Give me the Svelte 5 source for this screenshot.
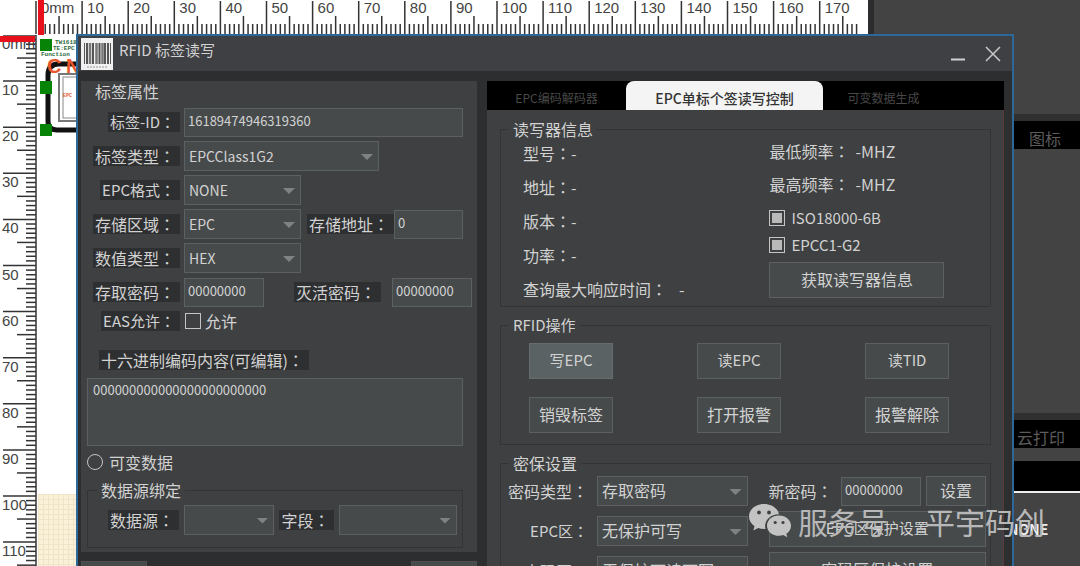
<script lang="ts">
  const STEP = 4.61;
  const ticks = (count: number) =>
    Array.from({ length: count }, (_, i) => ({
      at: i * STEP,
      kind: i % 10 === 0 ? "major" : i % 5 === 0 ? "mid" : "minor",
      label: i === 0 ? "0mm" : String(i),
    }));
  const across = ticks(179);
  const down = ticks(116);

  let tagId = $state("16189474946319360");
  let address = $state("0");
  let accessPwd = $state("00000000");
  let killPwd = $state("00000000");
  let easAllowed = $state(false);
  let hexContent = $state("000000000000000000000000");
  let newPwd = $state("00000000");
  let isoPartial = $state(true);
  let epcPartial = $state(true);

  let tab = $state(1);
  const tabs = ["EPC编码解码器", "EPC单标个签读写控制", "可变数据生成"];
  const readerInfo = ["型号", "地址", "版本", "功率"];
  const actions = ["写EPC", "读EPC", "读TID", "销毁标签", "打开报警", "报警解除"];
</script>

<!-- the TC face centres the full-width colon -->
{#snippet colon()}<i class="colon">：</i>{/snippet}

{#snippet combo(id: string, value: string)}
  <span class="combo" class:latin={/^\w+$/.test(value)}>
    <select {id}><option>{value}</option></select>
  </span>
{/snippet}

<div class="desktop">
  <main class="editor">
    <svg class="ruler-x" aria-hidden="true">
      {#each across as t}
        <line class="tick" x1={36 + t.at} x2={36 + t.at} y1={t.kind === "major" ? 1 : t.kind === "mid" ? 16 : 24} y2="34" />
        {#if t.kind === "major"}<text x={41 + t.at} y="13">{t.label}</text>{/if}
      {/each}
      <rect x="38" y="0" width="6" height="35" fill="#e8101a" />
    </svg>
    <div class="work">
      <svg class="ruler-y" aria-hidden="true">
        <line class="tick" x1="36" x2="36" y1="0" y2="1200" />
        {#each down as t}
          <line class="tick" y1={t.at} y2={t.at} x1={t.kind === "major" ? 3 : t.kind === "mid" ? 17 : 26} x2="36" />
          {#if t.kind === "major"}<text x="2" y={14 + t.at}>{t.label}</text>{/if}
        {/each}
        <rect x="0" y="1" width="35" height="6" fill="#e8101a" />
      </svg>
      <div class="paper">
        <div class="sheet">
          <svg width="60" height="110" viewBox="0 0 60 110" aria-hidden="true">
            <text class="tiny" x="17" y="9">TW16189</text>
            <text class="tiny" x="15" y="15">TE:EPC</text>
            <text class="tiny" x="3" y="21">Function</text>
            <path d="M60 29H21Q10 29 10 40V86Q10 95 19 95H60" fill="none" stroke="#111" stroke-width="5" />
            <text class="brand" x="9" y="38">C</text>
            <text class="brand" x="28" y="38">N</text>
            <rect x="21" y="39" width="50" height="47" fill="#fff" stroke="#777" stroke-width="2" />
            <rect x="25" y="42" width="46" height="41" fill="#fff" stroke="#888" />
            <text class="epc" x="25" y="62">EPC</text>
            <rect class="grip" x="2" y="4" width="12" height="12" />
            <rect class="grip" x="2" y="46" width="12" height="13" />
            <rect class="grip" x="2" y="89" width="12" height="12" />
          </svg>
        </div>
        <div class="grid-area"></div>
      </div>
    </div>
  </main>

  <aside class="side">
    <h2>图标</h2>
    <div class="fill"></div>
    <h2 class="print">云打印</h2>
    <div class="black"></div>
    <p>NONE</p>
  </aside>

  <div class="dialog" role="dialog" aria-labelledby="dlg-title">
    <header>
      <svg class="logo" width="32" height="32" viewBox="0 0 32 32" aria-hidden="true">
        <rect width="32" height="32" fill="#f0f0f0" />
        <path d="M3.500 5V26M29.500 5V26" stroke="#555" />
        <path d="M6 5V26M12 5V26M18.500 5V26M24 5V26M27 5V26" stroke="#555" stroke-width="2" />
        <path d="M9 5V26M15.500 5V26M21.500 5V26" stroke="#777" stroke-width="2.500" />
        <path d="M6 29H26" stroke="#999" stroke-dasharray="2 1" />
      </svg>
      <h1 id="dlg-title">RFID 标签读写</h1>
      <button class="win" aria-label="最小化">
        <svg width="16" height="16" viewBox="0 0 16 16"><path d="M1 13.500H15" stroke="#d0d0d0" stroke-width="2" /></svg>
      </button>
      <button class="win" aria-label="关闭">
        <svg width="16" height="16" viewBox="0 0 16 16"><path d="M1 1L15 15M15 1L1 15" stroke="#c8c8c8" stroke-width="1.500" /></svg>
      </button>
    </header>

    <div class="body">
      <div class="left">
        <section class="props">
          <h2>标签属性</h2>
          <div class="row">
            <label class="mixed" for="tag-id"><span>标签-ID{@render colon()}</span></label>
            <input id="tag-id" class="grow" bind:value={tagId} />
          </div>
          <div class="row wide">
            <label for="tag-type"><span>标签类型{@render colon()}</span></label>
            {@render combo("tag-type", "EPCClass1G2")}
          </div>
          <div class="row">
            <label class="mixed" for="epc-format"><span>EPC格式{@render colon()}</span></label>
            {@render combo("epc-format", "NONE")}
          </div>
          <div class="row">
            <label for="bank"><span>存储区域{@render colon()}</span></label>
            {@render combo("bank", "EPC")}
            <label class="second" for="address"><span>存储地址{@render colon()}</span></label>
            <input id="address" class="grow" bind:value={address} />
          </div>
          <div class="row">
            <label for="value-type"><span>数值类型{@render colon()}</span></label>
            {@render combo("value-type", "HEX")}
          </div>
          <div class="row pwd">
            <label for="access-pwd"><span>存取密码{@render colon()}</span></label>
            <input id="access-pwd" bind:value={accessPwd} />
            <label class="second" for="kill-pwd"><span>灭活密码{@render colon()}</span></label>
            <input id="kill-pwd" bind:value={killPwd} />
          </div>
          <div class="row eas">
            <label class="mixed" for="eas"><span>EAS允许{@render colon()}</span></label>
            <input id="eas" type="checkbox" bind:checked={easAllowed} />
            <label for="eas">允许</label>
          </div>
          <label class="hex-label" for="hex"><span>十六进制编码内容(可编辑){@render colon()}</span></label>
          <textarea id="hex" bind:value={hexContent}></textarea>
          <div class="variable">
            <input id="variable" type="radio" name="mode" value="variable" />
            <label for="variable">可变数据</label>
          </div>
          <fieldset class="bind">
            <legend>数据源绑定</legend>
            <label for="source"><span>数据源{@render colon()}</span></label>
            {@render combo("source", "")}
            <label for="field"><span>字段{@render colon()}</span></label>
            {@render combo("field", "")}
          </fieldset>
        </section>
        <footer>
          <button aria-label="保存"></button>
          <button aria-label="退出"></button>
        </footer>
      </div>

      <div class="right">
        <div class="tabs" role="tablist">
          {#each tabs as name, i}
            <button role="tab" aria-selected={tab === i} class:active={tab === i} onclick={() => (tab = i)}>{name}</button>
          {/each}
        </div>
        <div class="pane">
          <fieldset class="reader">
            <legend>读写器信息</legend>
            <div class="facts">
              {#each readerInfo as name}<p>{name}{@render colon()}-</p>{/each}
              <p>查询最大响应时间{@render colon()}<span class="gap">-</span></p>
            </div>
            <div class="caps">
              <p>最低频率{@render colon()}<span>-MHZ</span></p>
              <p>最高频率{@render colon()}<span>-MHZ</span></p>
              <label><input type="checkbox" bind:indeterminate={isoPartial} />ISO18000-6B</label>
              <label><input type="checkbox" bind:indeterminate={epcPartial} />EPCC1-G2</label>
              <button>获取读写器信息</button>
            </div>
          </fieldset>

          <fieldset class="ops">
            <legend class="mixed">RFID操作</legend>
            {#each actions as name, i}
              <button class:lit={i === 0} class:mixed={i < 3}>{name}</button>
            {/each}
          </fieldset>

          <fieldset class="secure">
            <legend>密保设置</legend>
            <div class="locks">
              <label for="pwd-type">密码类型{@render colon()}</label>
              {@render combo("pwd-type", "存取密码")}
              <label class="mixed" for="epc-lock">EPC区{@render colon()}</label>
              {@render combo("epc-lock", "无保护可写")}
              <label for="pwd-lock">密码区{@render colon()}</label>
              {@render combo("pwd-lock", "无保护可读可写")}
            </div>
            <div class="set">
              <div class="new-pwd">
                <label for="new-pwd">新密码{@render colon()}</label>
                <input id="new-pwd" bind:value={newPwd} />
                <button>设置</button>
              </div>
              <button class="mixed">EPC区保护设置</button>
              <button>密码区保护设置</button>
            </div>
          </fieldset>
        </div>
      </div>
    </div>
  </div>

  <div class="watermark">
    <svg width="42" height="34" viewBox="0 0 42 34" aria-hidden="true">
      <path
        d="M15 0C6.500 0 0 5.500 0 12.500C0 16.500 2.200 20 5.500 22.200L4.300 26.500L9.300 24C11 24.600 13 25 15 25L16.500 24.900C14.500 17 21 10 30 10.200C28.700 4.200 22.500 0 15 0Z"
        fill="#c3c3c3"
      />
      <path
        d="M30 11.500C23.200 11.500 18 16 18 21.700C18 27.400 23.200 31.800 30 31.800C31.500 31.800 33 31.500 34.300 31.100L38.300 33.300L37.300 29.700C40.200 27.900 42 25 42 21.700C42 16 36.800 11.500 30 11.500Z"
        fill="#c3c3c3"
      />
      <g fill="#3e4041">
        <circle cx="10" cy="8.500" r="1.900" /><circle cx="20" cy="8.500" r="1.900" />
        <circle cx="26.200" cy="18.500" r="1.600" /><circle cx="34" cy="18.500" r="1.600" />
      </g>
    </svg>
    <span>服务号</span>
    <span class="name">平宇码创</span>
  </div>
</div>

<style>
  :global(body) {
    background: #434343;
  }
  .desktop {
    position: relative;
    display: flex;
    height: 100vh;
    overflow: hidden;
    font: 16px/20px "Noto Sans CJK SC", sans-serif;
    color: #d2d2d2;
  }
  .desktop * {
    box-sizing: border-box;
  }
  h1,
  h2,
  p,
  fieldset,
  legend {
    margin: 0;
    padding: 0;
    font-size: 16px;
    font-weight: 400;
  }
  input,
  select,
  textarea,
  button {
    margin: 0;
    font: inherit;
    color: inherit;
    border-radius: 0;
  }
  .colon {
    font-family: "Noto Sans CJK TC", sans-serif;
    font-style: normal;
  }

  /* editor behind the dialog */
  .editor {
    flex: 1;
    display: flex;
    flex-direction: column;
    background: #fff;
    border-right: 6px solid #2c2c2e;
  }
  .ruler-x {
    width: 100%;
    height: 35px;
  }
  .work {
    flex: 1;
    display: flex;
    min-height: 0;
  }
  .ruler-y {
    width: 38px;
    height: 100%;
  }
  .ruler-x text,
  .ruler-y text {
    font: 15px "Liberation Sans", sans-serif;
    fill: #444;
  }
  .tick {
    stroke: #333;
    stroke-width: 1.5;
  }
  .paper {
    flex: 1;
    display: flex;
    flex-direction: column;
  }
  .sheet {
    height: 459px;
  }
  .grid-area {
    flex: 1;
    background:
      linear-gradient(#f0e4c8 1px, transparent 1px) 0 0 / 5px 5px,
      linear-gradient(90deg, #f0e4c8 1px, transparent 1px) 0 0 / 5px 5px,
      #fbf0d8;
  }
  .tiny {
    font: bold 6px "Liberation Mono", monospace;
    fill: #2c6b3c;
  }
  .brand {
    font: bold 20px "Liberation Sans", sans-serif;
    fill: #e8562a;
  }
  .epc {
    font: bold 5px "Liberation Mono", monospace;
    fill: #e0602f;
  }
  .grip {
    fill: #078407;
  }

  .side {
    width: 206px;
    padding-top: 114px;
    display: flex;
    flex-direction: column;
    background: #434343;
  }
  .side h2 {
    height: 35px;
    padding: 7px 0 0 155px;
    border-top: 7px solid #303030;
    background: #000;
    color: #5c5c5c;
    line-height: 20px;
  }
  .side h2.print {
    padding-left: 143px;
  }
  .side .fill {
    height: 264px;
  }
  .black {
    height: 32px;
    margin-top: 13px;
    background: #000;
    border-bottom: 2px solid #eee;
  }
  .side p {
    padding: 26px 0 0 134px;
    color: #eee;
    font-size: 14px;
    font-weight: 700;
  }

  /* dialog */
  .dialog {
    position: absolute;
    top: 34px;
    left: 76px;
    right: 66px;
    display: flex;
    flex-direction: column;
    background: #2d2e30;
    border: 2px solid #2d689b;
  }
  header {
    display: flex;
    align-items: flex-start;
    gap: 19px;
    height: 35px;
    padding: 2px 11px 0 3px;
    background: #3f4044;
  }
  .logo {
    margin-right: -13px;
  }
  h1 {
    flex: 1;
    font-size: 15px;
    padding-top: 2px;
  }
  .win {
    display: flex;
    padding: 8px 0 0;
    background: none;
    border: 0;
  }
  .body {
    display: grid;
    grid-template-columns: minmax(0, 396fr) minmax(0, 517fr);
    gap: 10px;
    padding: 10px 8px 0 3px;
  }

  input:not([type]),
  textarea,
  select,
  fieldset button,
  footer button {
    background: #464a4b;
    border: 1px solid #5b6061;
  }
  input:not([type]) {
    width: 80px;
    height: 29px;
    padding: 0 3px 4px;
    font-size: 13px;
  }
  .combo {
    position: relative;
    width: 117px;
    height: 30px;
  }
  .combo::after {
    content: "";
    position: absolute;
    top: 13px;
    right: 6px;
    width: 12px;
    height: 6px;
    background: #7e8283;
    clip-path: polygon(0 0, 100% 0, 50% 100%);
    pointer-events: none;
  }
  select {
    appearance: none;
    width: 100%;
    height: 100%;
    padding: 0 4px 2px;
  }
  .latin select {
    padding-bottom: 0;
    font-size: 14px;
  }
  fieldset {
    border: 1px solid #323435;
    min-width: 0;
  }
  legend {
    padding: 0 4px;
  }
  .mixed {
    font-size: 15px;
  }
  input[type="checkbox"],
  input[type="radio"] {
    appearance: none;
    width: 16px;
    height: 16px;
    padding: 2px;
    border: 1px solid #c4c4c4;
    background-clip: content-box;
  }
  input[type="checkbox"]:indeterminate,
  input:checked {
    background-color: #b9b9b9;
  }
  input[type="radio"] {
    border-radius: 50%;
  }

  .props {
    padding: 0 14px 4px 0;
    background: #3e4041;
  }
  .props h2 {
    padding-left: 14px;
    margin-bottom: 6px;
  }
  .row {
    display: flex;
    align-items: center;
    gap: 4px;
    height: 30px;
    margin-bottom: 4px;
  }
  .row > label:first-child {
    width: 99px;
    text-align: right;
  }
  label > span {
    display: inline-block;
    height: 20px;
    padding: 0 5px 0 2px;
    background: #2e2f31;
    white-space: nowrap;
    vertical-align: top;
  }
  .row .grow {
    flex: 1;
    width: 0;
  }
  .wide .combo {
    width: 195px;
  }
  .second {
    margin: 0 -4px 0 2px;
  }
  .pwd {
    margin-right: -9px;
  }
  .pwd .second {
    margin: 0 7px 0 auto;
  }
  .row.eas {
    height: 20px;
  }
  .eas input {
    margin-left: 1px;
  }
  .hex-label {
    display: block;
    margin: 19px 0 8px 18px;
  }
  textarea {
    display: block;
    width: calc(100% - 6px);
    height: 68px;
    margin-left: 6px;
    padding: 1px 5px;
    resize: none;
    overflow: hidden;
    font-size: 13px;
  }
  .variable {
    display: flex;
    align-items: center;
    gap: 6px;
    margin: 6px 0 8px 6px;
  }
  .bind {
    display: flex;
    align-items: center;
    gap: 5px;
    height: 68px;
    margin-left: 6px;
    padding: 0 5px 8px 20px;
  }
  .bind legend {
    margin-left: -11px;
  }
  .bind .combo {
    flex: 90;
  }
  .bind .combo:last-child {
    flex: 117;
  }
  footer {
    display: flex;
    justify-content: space-between;
    margin-top: 9px;
  }
  footer button {
    width: 66px;
    height: 30px;
    border-color: #4c4f50;
  }

  .right {
    display: flex;
    flex-direction: column;
  }
  .tabs {
    display: flex;
    height: 29px;
    background: #000;
  }
  .tabs button {
    flex: 0 0 139px;
    padding: 4px 0 0;
    border: 0;
    background: none;
    color: #484848;
    font-size: 12px;
  }
  .tabs button:last-child {
    flex-basis: 121px;
  }
  .tabs .active {
    flex-basis: 197px;
    border-radius: 8px 8px 0 0;
    background: #f4f4f4;
    color: #333;
    font-size: 14px;
    font-weight: 500;
  }
  .pane {
    display: flex;
    flex-direction: column;
    gap: 8px;
    padding: 9px 12px 0 13px;
    background: #3e4041;
    border-right: 1px solid #5a3a3c;
  }
  .pane fieldset {
    padding-left: var(--inset);
  }
  .pane legend {
    margin-left: calc(8px - var(--inset));
  }
  fieldset button {
    height: 36px;
    padding: 0 0 2px;
  }
  .reader {
    --inset: 22px;
    display: grid;
    grid-template-columns: 247fr 221fr;
    height: 188px;
  }
  .facts {
    margin-top: -3px;
  }
  .facts p {
    line-height: 34px;
  }
  .gap {
    margin-left: 12px;
  }
  .caps {
    display: flex;
    flex-direction: column;
    align-items: flex-start;
  }
  .caps p {
    height: 33px;
    line-height: 24px;
  }
  .caps p span {
    margin-left: 6px;
  }
  .caps label {
    display: flex;
    align-items: center;
    gap: 6px;
    height: 28px;
    font-size: 15px;
    margin-top: -1px;
  }
  .caps button {
    width: 175px;
    margin-top: 3px;
  }
  .ops {
    --inset: 28px;
    display: grid;
    grid-template-columns: repeat(3, 84px);
    justify-content: space-between;
    align-content: start;
    row-gap: 18px;
    height: 130px;
    padding: 8px 41px 0 0;
  }
  .ops .lit {
    background: #5b6264;
    border-color: #666d6f;
  }
  .secure {
    --inset: 7px;
    display: flex;
    gap: 21px;
    padding: 3px 4px 12px 0;
  }
  .locks {
    flex: 239;
    display: grid;
    grid-template-columns: auto 1fr;
    gap: 10px 9px;
    align-content: start;
    align-items: center;
  }
  .locks label {
    text-align: right;
  }
  .locks .combo {
    width: auto;
  }
  .set {
    flex: 217;
    display: flex;
    flex-direction: column;
    gap: 5px;
  }
  .new-pwd {
    display: flex;
    align-items: center;
    gap: 5px;
  }
  .new-pwd label {
    flex: 1;
    white-space: nowrap;
  }
  .new-pwd button {
    width: 60px;
    height: 30px;
  }

  .watermark {
    position: absolute;
    right: 35px;
    bottom: 27px;
    display: flex;
    align-items: center;
    gap: 7px;
    font: 400 30px/36px "Noto Sans CJK SC", sans-serif;
    color: #b8b8b8;
    pointer-events: none;
  }
  .watermark .name {
    margin-left: 30px;
  }
</style>
